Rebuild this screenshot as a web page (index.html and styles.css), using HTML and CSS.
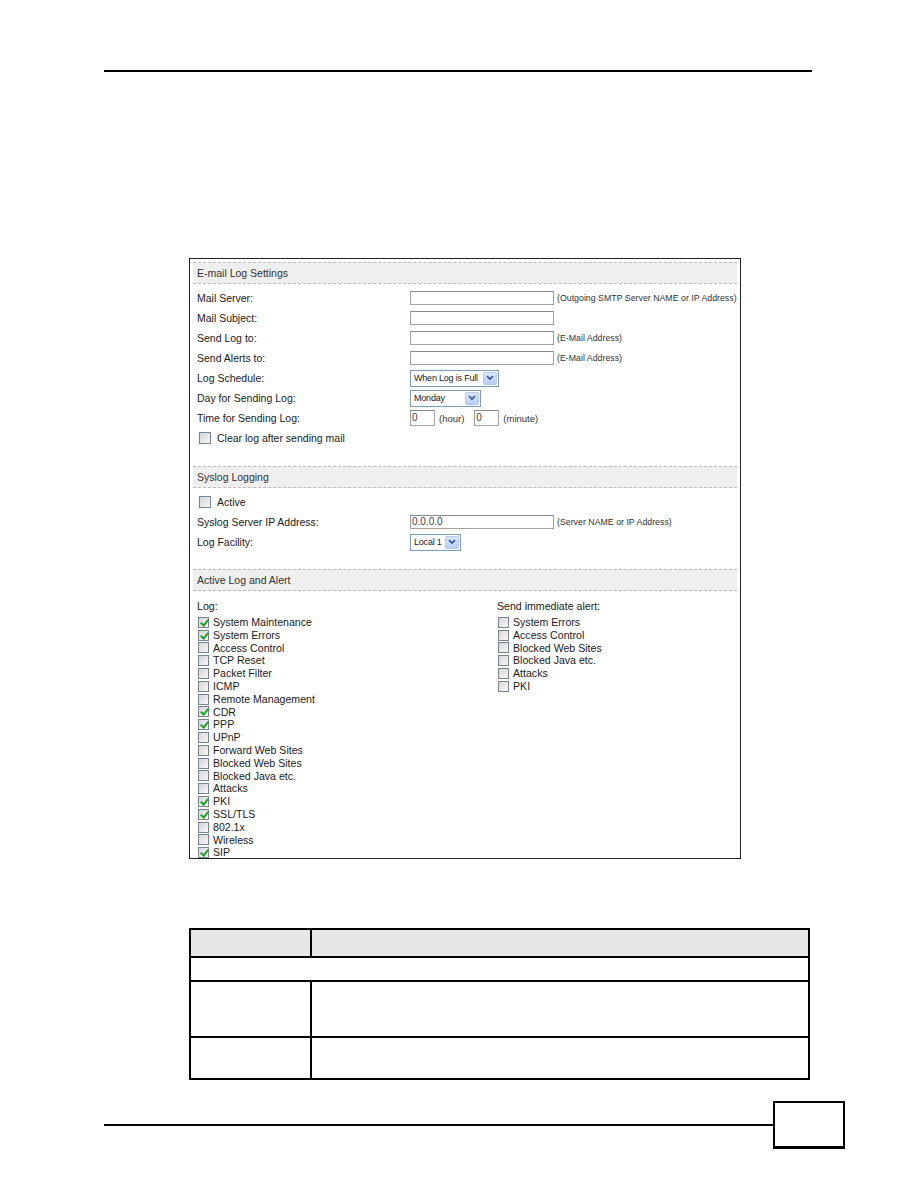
FILE: index.html
```html
<!DOCTYPE html>
<html lang="en">
<head>
  <meta charset="UTF-8">
  <title>E-mail Log Settings</title>
  <link rel="stylesheet" href="styles.css">
</head>
<body>
  <div class="page">
    <div class="top-rule"></div>

    <div class="shot">
      <div class="sec-head">E-mail Log Settings</div>
      <div class="sec-body email">
        <div class="row"><span class="label">Mail Server:</span><span class="input"></span><span class="note">(Outgoing SMTP Server NAME or IP Address)</span></div>
        <div class="row"><span class="label">Mail Subject:</span><span class="input"></span></div>
        <div class="row"><span class="label">Send Log to:</span><span class="input"></span><span class="note">(E-Mail Address)</span></div>
        <div class="row"><span class="label">Send Alerts to:</span><span class="input"></span><span class="note">(E-Mail Address)</span></div>
        <div class="row"><span class="label">Log Schedule:</span><span class="select w-full">When Log is Full<span class="arrow"><svg viewBox="0 0 8 6" width="8" height="6"><path d="M1 1 L4 4 L7 1" fill="none" stroke="#2c4f9e" stroke-width="1.6"/></svg></span></span></div>
        <div class="row"><span class="label">Day for Sending Log:</span><span class="select w-day">Monday<span class="arrow"><svg viewBox="0 0 8 6" width="8" height="6"><path d="M1 1 L4 4 L7 1" fill="none" stroke="#2c4f9e" stroke-width="1.6"/></svg></span></span></div>
        <div class="row"><span class="label">Time for Sending Log:</span><span class="input small">0</span><span class="unit hour">(hour)</span><span class="input small">0</span><span class="unit">(minute)</span></div>
        <div class="row check-row"><span class="box big"></span><span>Clear log after sending mail</span></div>
      </div>

      <div class="sec-head">Syslog Logging</div>
      <div class="sec-body syslog">
        <div class="row check-row"><span class="box big"></span><span>Active</span></div>
        <div class="row"><span class="label">Syslog Server IP Address:</span><span class="input">0.0.0.0</span><span class="note">(Server NAME or IP Address)</span></div>
        <div class="row"><span class="label">Log Facility:</span><span class="select w-local">Local 1<span class="arrow"><svg viewBox="0 0 8 6" width="8" height="6"><path d="M1 1 L4 4 L7 1" fill="none" stroke="#2c4f9e" stroke-width="1.6"/></svg></span></span></div>
      </div>

      <div class="sec-head">Active Log and Alert</div>
      <div class="sec-body alerts">
        <div class="col">
          <div class="col-title">Log:</div>
          <ul class="checks">
            <li><span class="box on"></span>System Maintenance</li>
            <li><span class="box on"></span>System Errors</li>
            <li><span class="box"></span>Access Control</li>
            <li><span class="box"></span>TCP Reset</li>
            <li><span class="box"></span>Packet Filter</li>
            <li><span class="box"></span>ICMP</li>
            <li><span class="box"></span>Remote Management</li>
            <li><span class="box on"></span>CDR</li>
            <li><span class="box on"></span>PPP</li>
            <li><span class="box"></span>UPnP</li>
            <li><span class="box"></span>Forward Web Sites</li>
            <li><span class="box"></span>Blocked Web Sites</li>
            <li><span class="box"></span>Blocked Java etc.</li>
            <li><span class="box"></span>Attacks</li>
            <li><span class="box on"></span>PKI</li>
            <li><span class="box on"></span>SSL/TLS</li>
            <li><span class="box"></span>802.1x</li>
            <li><span class="box"></span>Wireless</li>
            <li><span class="box on"></span>SIP</li>
          </ul>
        </div>
        <div class="col">
          <div class="col-title">Send immediate alert:</div>
          <ul class="checks">
            <li><span class="box"></span>System Errors</li>
            <li><span class="box"></span>Access Control</li>
            <li><span class="box"></span>Blocked Web Sites</li>
            <li><span class="box"></span>Blocked Java etc.</li>
            <li><span class="box"></span>Attacks</li>
            <li><span class="box"></span>PKI</li>
          </ul>
        </div>
      </div>
    </div>

    <table class="desc">
      <tr class="head"><th class="c1"></th><th></th></tr>
      <tr class="sub"><td colspan="2"></td></tr>
      <tr class="r3"><td></td><td></td></tr>
      <tr class="r4"><td></td><td></td></tr>
    </table>

    <div class="footer">
      <div class="foot-rule"></div>
      <div class="page-box"></div>
    </div>
  </div>
</body>
</html>
```

FILE: styles.css
```css
* {
  box-sizing: border-box;
}

body {
  margin: 0;
  background: #ffffff;
  font-family: 'Liberation Sans', Arial, sans-serif;
  color: #1a1a1a;
}

.page {
  width: 918px;
  height: 1188px;
  padding-top: 70px;
}

.top-rule {
  margin-left: 104px;
  width: 708px;
  border-top: 2px solid #000;
}

/* screenshot of the settings screen */
.shot {
  margin: 186px 0 0 189px;
  width: 552px;
  height: 601px;
  border: 1px solid #222;
  padding: 3px 3px 0;
  font-size: 10.5px;
}

.sec-head {
  height: 22px;
  line-height: 20px;
  padding-left: 4px;
  background: #efefef;
  border-top: 1px dashed #bdbdbd;
  border-bottom: 1px dashed #bdbdbd;
  color: #333;
}

.sec-body {
  padding-left: 4px;
}

.email {
  padding-top: 4px;
  padding-bottom: 18px;
}

.syslog {
  padding-top: 4px;
  padding-bottom: 17px;
}

.row {
  display: flex;
  align-items: center;
  height: 20px;
  white-space: nowrap;
}

.label {
  width: 213px;
  flex-shrink: 0;
}

.input {
  display: inline-block;
  width: 144px;
  height: 14px;
  line-height: 12px;
  border: 1px solid #a3a3a3;
  border-top-color: #8a8a8a;
  padding-left: 1px;
  font-size: 10px;
  color: #444;
  background: #fff;
}

.input.small {
  width: 25px;
  height: 16px;
  line-height: 14px;
}

.note {
  margin-left: 3px;
  font-size: 8.8px;
  color: #333;
}

.unit {
  margin: 0 3px 0 4px;
  font-size: 9.5px;
  color: #333;
}

.unit.hour {
  margin-right: 10px;
}

.select {
  display: inline-flex;
  align-items: center;
  justify-content: space-between;
  height: 17px;
  border: 1px solid #7f9db9;
  padding: 0 1px 0 3px;
  font-size: 9px;
  letter-spacing: -0.2px;
  background: #fff;
}

.w-full { width: 89px; }
.w-day { width: 71px; }
.w-local { width: 51px; }

.arrow {
  display: inline-flex;
  align-items: center;
  justify-content: center;
  flex-shrink: 0;
  width: 14px;
  height: 13px;
  margin-left: 2px;
  border: 1px solid #b7c9f0;
  border-radius: 2px;
  background: linear-gradient(#dbe6fd, #b8cdf8);
}

.check-row {
  padding-left: 2px;
  gap: 6px;
}

.box {
  display: inline-block;
  flex-shrink: 0;
  width: 11px;
  height: 11px;
  border: 1px solid #77838f;
  background: linear-gradient(135deg, #d6d6d6, #f8f8f8);
  position: relative;
}

.box.big {
  width: 12px;
  height: 12px;
}

.box.on::after {
  content: "";
  position: absolute;
  left: 3px;
  top: 0px;
  width: 3px;
  height: 6px;
  border-right: 2px solid #21a121;
  border-bottom: 2px solid #21a121;
  transform: rotate(40deg);
}

/* log / alert columns */
.alerts {
  display: grid;
  grid-template-columns: 300px auto;
  padding-top: 9px;
  font-size: 10.6px;
}

.col-title {
  height: 13px;
  line-height: 13px;
  margin-bottom: 3px;
}

.checks {
  list-style: none;
  margin: 0;
  padding: 0 0 0 1px;
}

.checks li {
  display: flex;
  align-items: center;
  gap: 4px;
  height: 12.8px;
  line-height: 12.8px;
}

/* description table */
.desc {
  margin: 69px 0 0 189px;
  width: 621px;
  border-collapse: collapse;
}

.desc th,
.desc td {
  border: 2px solid #000;
  padding: 0;
}

.desc .c1 {
  width: 121px;
}

.head th {
  height: 28px;
  background: #e7e7e7;
}

.sub td { height: 24px; }
.r3 td { height: 56px; }
.r4 td { height: 42px; }

.footer {
  display: flex;
  align-items: center;
  margin: 21px 0 0 104px;
  width: 741px;
}

.foot-rule {
  flex: 1;
  border-top: 2px solid #000;
}

.page-box {
  width: 72px;
  height: 48px;
  border: 2px solid #000;
  border-bottom-width: 3px;
}
```
